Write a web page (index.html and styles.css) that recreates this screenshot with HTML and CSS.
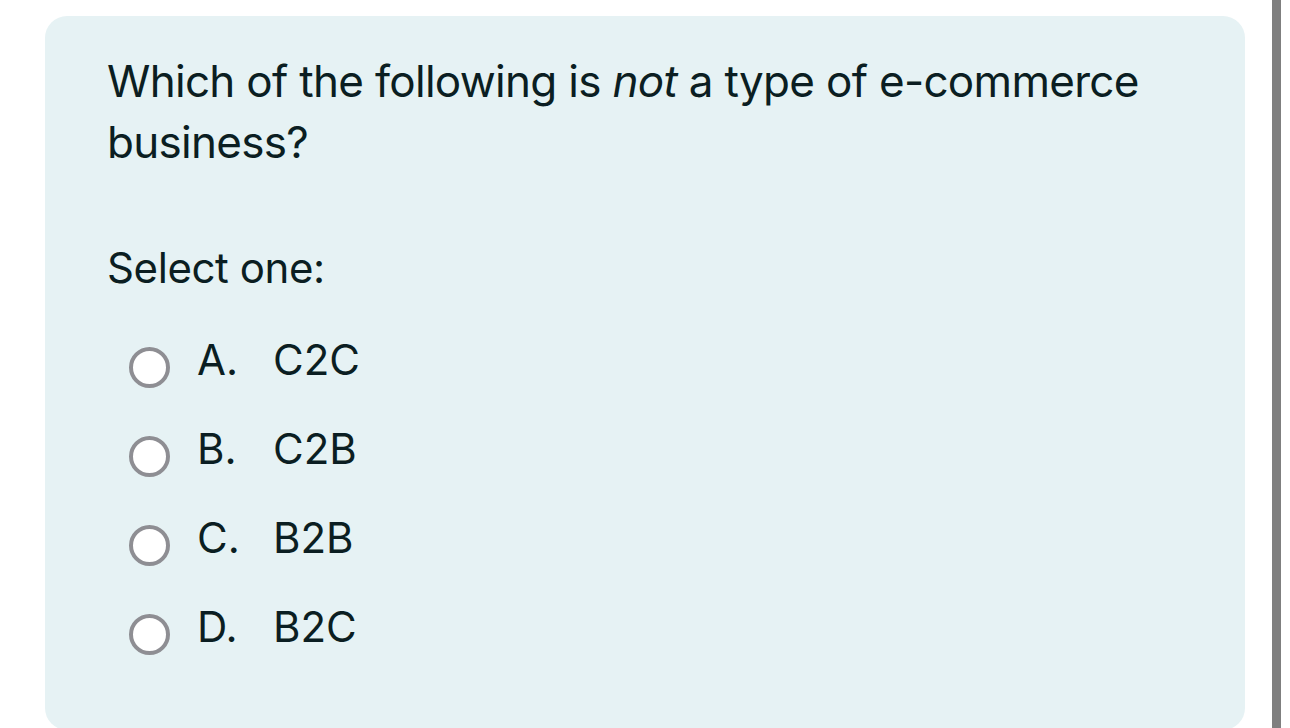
FILE: index.html
```html
<!DOCTYPE html>
<html lang="en">
  <head>
    <meta charset="UTF-8" />
    <meta name="viewport" content="width=device-width, initial-scale=1.0" />
    <title>Question</title>
    <link rel="stylesheet" href="styles.css">
  </head>
  <body>
    <div class="page">
      <div class="question-card">
        <p class="question-text">
          Which of the following is <em>not</em> a type of <span class="nowrap">e-commerce</span> business?
        </p>

        <p class="prompt">Select one:</p>

        <div class="answers">
          <label class="answer">
            <span class="radio"></span>
            <span class="answer-text">
              <span class="answer-letter">A.</span>
              <span class="answer-label">C2C</span>
            </span>
          </label>
          <label class="answer">
            <span class="radio"></span>
            <span class="answer-text">
              <span class="answer-letter">B.</span>
              <span class="answer-label">C2B</span>
            </span>
          </label>
          <label class="answer">
            <span class="radio"></span>
            <span class="answer-text">
              <span class="answer-letter">C.</span>
              <span class="answer-label">B2B</span>
            </span>
          </label>
          <label class="answer">
            <span class="radio"></span>
            <span class="answer-text">
              <span class="answer-letter">D.</span>
              <span class="answer-label">B2C</span>
            </span>
          </label>
        </div>
      </div>

      <div class="scroll-bar"></div>
    </div>
  </body>
</html>
```

FILE: styles.css
```css
body {
  margin: 0;
  background: #ffffff;
  font-family: Inter, "Noto Sans", sans-serif;
  color: #0b1e22;
  overflow: hidden;
}

.page {
  display: flex;
  height: 728px;
  padding-top: 16px;
  box-sizing: border-box;
}

.question-card {
  width: 1200px;
  height: 714px;
  margin-left: 45px;
  padding: 35px 62px 0;
  box-sizing: border-box;
  background: #e6f2f4;
  border-radius: 22px;
  flex-shrink: 0;
}

.question-text {
  margin: 0;
  font-size: 44px;
  line-height: 61px;
  letter-spacing: -0.7px;
}

.question-text em {
  font-style: italic;
}

.nowrap {
  white-space: nowrap;
}

.prompt {
  margin: 64px 0 0;
  font-size: 42px;
  line-height: 61px;
  letter-spacing: -0.4px;
}

.answers {
  margin-top: 25px;
  margin-left: 22px;
}

.answer {
  display: flex;
  align-items: center;
  height: 89px;
  font-size: 42px;
}

.answer-text {
  display: flex;
  margin-bottom: 16px;
}

.radio {
  width: 41px;
  height: 41px;
  border: 4px solid #8e8e93;
  border-radius: 50%;
  background: #ffffff;
  box-sizing: border-box;
  margin-right: 27px;
  flex-shrink: 0;
}

.answer-letter {
  width: 76px;
}

.scroll-bar {
  width: 9px;
  height: 728px;
  margin-top: -16px;
  margin-left: 27px;
  background: #7f7f7f;
  flex-shrink: 0;
}
```
